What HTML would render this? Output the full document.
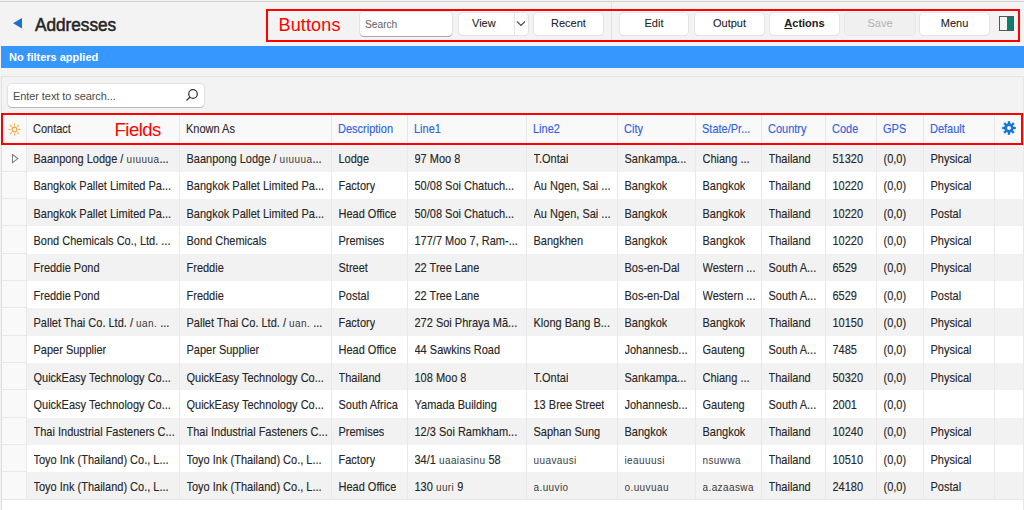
<!DOCTYPE html>
<html><head><meta charset="utf-8"><style>
*{box-sizing:border-box;margin:0;padding:0}
html,body{width:1024px;height:510px;overflow:hidden;background:#f3f3f3;font-family:"Liberation Sans",sans-serif;color:#333}
.a{position:absolute}
.btn{position:absolute;top:13px;height:22px;background:#fff;border-radius:4px;box-shadow:0 0 0 1px #e4e4e4, 0 1px 0 0 #d2d2d2;font-size:11px;color:#222;text-align:center;line-height:21px;-webkit-text-stroke:0.08px currentColor}
.cell{position:absolute;font-size:11px;white-space:nowrap;overflow:hidden;color:#262626;line-height:14px;transform:scaleY(1.08);-webkit-text-stroke:0.12px currentColor}
.vl{position:absolute;width:1px;background:#e8e8e8}
.hl{position:absolute;height:1px;background:#e8e8e8}
.th{font-size:10px;letter-spacing:0.4px;color:#3a3a3a;-webkit-text-stroke:0}
</style></head><body>

<div class="a" style="left:0;top:0;width:1024px;height:1px;background:#f2f2f2"></div>
<div class="a" style="left:0;top:1px;width:1024px;height:1px;background:#d2d2d2"></div>
<div class="a" style="left:0;top:2px;width:1024px;height:44px;background:#f3f3f3"></div>
<svg class="a" style="left:13px;top:18px" width="10" height="11"><polygon points="9,0 9,10.5 0,5.25" fill="#1e6fd2"/></svg>
<div class="a" style="left:34.5px;top:14px;font-size:18px;color:#262626;line-height:22px;transform:scaleX(0.955);transform-origin:0 0;-webkit-text-stroke:0.55px #262626">Addresses</div>
<div class="a" style="left:611px;top:2px;width:1px;height:38px;background:#e2e2e2"></div>
<div class="a" style="left:266px;top:9px;width:754px;height:33px;border:2px solid #f00"></div>
<div class="a" style="left:278.5px;top:14.8px;font-size:18px;color:#f00;line-height:20px;letter-spacing:0.15px">Buttons</div>
<div class="btn" style="left:360px;top:12px;width:92px;height:24px;text-align:left;padding-left:5px;color:#6a6a6a;font-size:10.2px;line-height:25px;box-shadow:0 1px 0 0 #a8a8a8, 0 0 0 1px #e4e4e4">Search</div>
<div class="btn" style="left:459px;width:69px;text-align:left;padding-left:13px">View</div>
<div class="a" style="left:514px;top:13px;width:1px;height:22px;background:#e6e6e6"></div>
<svg class="a" style="left:516px;top:20px" width="10" height="7"><polyline points="1,1.5 5,5.5 9,1.5" fill="none" stroke="#4a4a4a" stroke-width="1.1"/></svg>
<div class="btn" style="left:534px;width:69px">Recent</div>
<div class="btn" style="left:620px;width:68px">Edit</div>
<div class="btn" style="left:695px;width:69px">Output</div>
<div class="btn" style="left:770px;width:69px;font-weight:bold;color:#1f1f1f"><span style="text-decoration:underline">A</span>ctions</div>
<div class="btn" style="left:845px;width:70px;background:#f0f0f0;color:#b5b5b5;box-shadow:0 0 0 1px #e6e6e6">Save</div>
<div class="btn" style="left:920px;width:69px">Menu</div>
<div class="a" style="left:999px;top:16px;width:15px;height:15px;border:1px solid #555;background:linear-gradient(90deg,#f4f4f4 0,#f4f4f4 7px,#0e7e6c 7px)"></div>
<div class="a" style="left:1px;top:46px;width:1023px;height:22px;background:#3697fe;color:#fff;font-weight:bold;font-size:11px;line-height:22px;padding-left:8px">No filters applied</div>
<div class="a" style="left:1px;top:76px;width:1023px;height:434px;border-top:1px solid #e2e2e2;border-left:1px solid #e2e2e2;background:#f3f3f3"></div>
<div class="a" style="left:8px;top:84px;width:196px;height:23px;background:#fff;border-radius:4px;box-shadow:0 1px 0 #b8b8b8,0 0 0 1px #e2e2e2;font-size:11px;color:#4a4a4a;line-height:24px;letter-spacing:-0.08px;padding-left:5px">Enter text to search...</div>
<svg class="a" style="left:185px;top:88px" width="14" height="14"><circle cx="8" cy="6" r="4.3" fill="none" stroke="#333" stroke-width="1.2"/><line x1="4.9" y1="9.1" x2="1.5" y2="12.5" stroke="#333" stroke-width="1.3"/></svg>
<div class="a" style="left:2px;top:113px;width:1022px;height:397px;background:#fff"></div>
<div class="a" style="left:2px;top:113px;width:1021px;height:31px;background:#f9f9f9"></div>
<div class="a" style="left:27px;top:144.50px;width:996px;height:27.33px;background:#f2f2f2"></div>
<div class="a" style="left:27px;top:171.83px;width:996px;height:27.33px;background:#ffffff"></div>
<div class="a" style="left:27px;top:199.16px;width:996px;height:27.33px;background:#f2f2f2"></div>
<div class="a" style="left:27px;top:226.49px;width:996px;height:27.33px;background:#ffffff"></div>
<div class="a" style="left:27px;top:253.82px;width:996px;height:27.33px;background:#f2f2f2"></div>
<div class="a" style="left:27px;top:281.15px;width:996px;height:27.33px;background:#ffffff"></div>
<div class="a" style="left:27px;top:308.48px;width:996px;height:27.33px;background:#f2f2f2"></div>
<div class="a" style="left:27px;top:335.81px;width:996px;height:27.33px;background:#ffffff"></div>
<div class="a" style="left:27px;top:363.14px;width:996px;height:27.33px;background:#f2f2f2"></div>
<div class="a" style="left:27px;top:390.47px;width:996px;height:27.33px;background:#ffffff"></div>
<div class="a" style="left:27px;top:417.80px;width:996px;height:27.33px;background:#f2f2f2"></div>
<div class="a" style="left:27px;top:445.13px;width:996px;height:27.33px;background:#ffffff"></div>
<div class="a" style="left:27px;top:472.46px;width:996px;height:27.33px;background:#f2f2f2"></div>
<div class="a" style="left:2px;top:144px;width:24px;height:355.29px;background:#f9f9f9"></div>
<div class="hl" style="left:2px;top:170.83px;width:25px"></div>
<div class="hl" style="left:2px;top:198.16px;width:25px"></div>
<div class="hl" style="left:2px;top:225.49px;width:25px"></div>
<div class="hl" style="left:2px;top:252.82px;width:25px"></div>
<div class="hl" style="left:2px;top:280.15px;width:25px"></div>
<div class="hl" style="left:2px;top:307.48px;width:25px"></div>
<div class="hl" style="left:2px;top:334.81px;width:25px"></div>
<div class="hl" style="left:2px;top:362.14px;width:25px"></div>
<div class="hl" style="left:2px;top:389.47px;width:25px"></div>
<div class="hl" style="left:2px;top:416.80px;width:25px"></div>
<div class="hl" style="left:2px;top:444.13px;width:25px"></div>
<div class="hl" style="left:2px;top:471.46px;width:25px"></div>
<div class="hl" style="left:2px;top:498.79px;width:25px"></div>
<div class="hl" style="left:2px;top:498.79px;width:1021px"></div>
<div class="vl" style="left:26px;top:113px;height:386.79px"></div>
<div class="vl" style="left:179px;top:113px;height:386.79px"></div>
<div class="vl" style="left:331px;top:113px;height:386.79px"></div>
<div class="vl" style="left:407px;top:113px;height:386.79px"></div>
<div class="vl" style="left:526px;top:113px;height:386.79px"></div>
<div class="vl" style="left:617px;top:113px;height:386.79px"></div>
<div class="vl" style="left:695px;top:113px;height:386.79px"></div>
<div class="vl" style="left:761px;top:113px;height:386.79px"></div>
<div class="vl" style="left:825px;top:113px;height:386.79px"></div>
<div class="vl" style="left:876px;top:113px;height:386.79px"></div>
<div class="vl" style="left:923px;top:113px;height:386.79px"></div>
<div class="vl" style="left:994px;top:113px;height:386.79px"></div>
<div class="vl" style="left:1px;top:113px;height:397px;background:#dcdcdc"></div>
<div class="vl" style="left:1023px;top:76px;height:434px"></div>
<div class="cell" style="left:33px;top:121.8px;color:#2b2b2b">Contact</div>
<div class="cell" style="left:186px;top:121.8px;color:#2b2b2b">Known As</div>
<div class="cell" style="left:338px;top:121.8px;color:#2f61e0">Description</div>
<div class="cell" style="left:414px;top:121.8px;color:#2f61e0">Line1</div>
<div class="cell" style="left:533px;top:121.8px;color:#2f61e0">Line2</div>
<div class="cell" style="left:624px;top:121.8px;color:#2f61e0">City</div>
<div class="cell" style="left:702px;top:121.8px;color:#2f61e0">State/Pr...</div>
<div class="cell" style="left:768px;top:121.8px;color:#2f61e0">Country</div>
<div class="cell" style="left:832px;top:121.8px;color:#2f61e0">Code</div>
<div class="cell" style="left:883px;top:121.8px;color:#2f61e0">GPS</div>
<div class="cell" style="left:930px;top:121.8px;color:#2f61e0">Default</div>
<svg class="a" style="left:8px;top:123px" width="13" height="13" viewBox="0 0 13 13"><circle cx="6.5" cy="6.5" r="2.4" fill="none" stroke="#f7a035" stroke-width="1.1"/><line x1="10.50" y1="6.50" x2="12.50" y2="6.50" stroke="#f7a035" stroke-width="1.1"/><line x1="9.33" y1="9.33" x2="10.74" y2="10.74" stroke="#f7a035" stroke-width="1.1"/><line x1="6.50" y1="10.50" x2="6.50" y2="12.50" stroke="#f7a035" stroke-width="1.1"/><line x1="3.67" y1="9.33" x2="2.26" y2="10.74" stroke="#f7a035" stroke-width="1.1"/><line x1="2.50" y1="6.50" x2="0.50" y2="6.50" stroke="#f7a035" stroke-width="1.1"/><line x1="3.67" y1="3.67" x2="2.26" y2="2.26" stroke="#f7a035" stroke-width="1.1"/><line x1="6.50" y1="2.50" x2="6.50" y2="0.50" stroke="#f7a035" stroke-width="1.1"/><line x1="9.33" y1="3.67" x2="10.74" y2="2.26" stroke="#f7a035" stroke-width="1.1"/></svg>
<svg class="a" style="left:1002px;top:121px" width="14" height="14" viewBox="0 0 14 14"><g fill="#1a74d6"><rect x="5.8" y="0.2" width="2.4" height="4" transform="rotate(0 7 7)"/><rect x="5.8" y="0.2" width="2.4" height="4" transform="rotate(45 7 7)"/><rect x="5.8" y="0.2" width="2.4" height="4" transform="rotate(90 7 7)"/><rect x="5.8" y="0.2" width="2.4" height="4" transform="rotate(135 7 7)"/><rect x="5.8" y="0.2" width="2.4" height="4" transform="rotate(180 7 7)"/><rect x="5.8" y="0.2" width="2.4" height="4" transform="rotate(225 7 7)"/><rect x="5.8" y="0.2" width="2.4" height="4" transform="rotate(270 7 7)"/><rect x="5.8" y="0.2" width="2.4" height="4" transform="rotate(315 7 7)"/><circle cx="7" cy="7" r="4.7"/></g><circle cx="7" cy="7" r="2" fill="#f9f9f9"/></svg>
<svg class="a" style="left:12px;top:154px" width="7" height="10"><polygon points="0.5,0.5 5.8,4.6 0.5,8.7" fill="none" stroke="#808080" stroke-width="1.05"/></svg>
<div class="a" style="left:1px;top:113px;width:1022px;height:32px;border:2px solid #f00"></div>
<div class="a" style="left:114.5px;top:118.5px;font-size:18.5px;color:#f00;letter-spacing:-0.5px;line-height:22px">Fields</div>
<div class="cell" style="left:33.5px;top:152.00px;max-width:145px">Baanpong Lodge / <span class="th">uıuuua</span>...</div>
<div class="cell" style="left:186.5px;top:152.00px;max-width:144px">Baanpong Lodge / <span class="th">uıuuua</span>...</div>
<div class="cell" style="left:338.5px;top:152.00px;max-width:68px">Lodge</div>
<div class="cell" style="left:414.5px;top:152.00px;max-width:111px">97 Moo 8</div>
<div class="cell" style="left:533.5px;top:152.00px;max-width:83px">T.Ontai</div>
<div class="cell" style="left:624.5px;top:152.00px;max-width:70px">Sankampa...</div>
<div class="cell" style="left:702.5px;top:152.00px;max-width:58px">Chiang ...</div>
<div class="cell" style="left:768.5px;top:152.00px;max-width:56px">Thailand</div>
<div class="cell" style="left:832.5px;top:152.00px;max-width:43px">51320</div>
<div class="cell" style="left:883.5px;top:152.00px;max-width:39px">(0,0)</div>
<div class="cell" style="left:930.5px;top:152.00px;max-width:63px">Physical</div>
<div class="cell" style="left:33.5px;top:179.33px;max-width:145px">Bangkok Pallet Limited Pa...</div>
<div class="cell" style="left:186.5px;top:179.33px;max-width:144px">Bangkok Pallet Limited Pa...</div>
<div class="cell" style="left:338.5px;top:179.33px;max-width:68px">Factory</div>
<div class="cell" style="left:414.5px;top:179.33px;max-width:111px">50/08 Soi Chatuch...</div>
<div class="cell" style="left:533.5px;top:179.33px;max-width:83px">Au Ngen, Sai ...</div>
<div class="cell" style="left:624.5px;top:179.33px;max-width:70px">Bangkok</div>
<div class="cell" style="left:702.5px;top:179.33px;max-width:58px">Bangkok</div>
<div class="cell" style="left:768.5px;top:179.33px;max-width:56px">Thailand</div>
<div class="cell" style="left:832.5px;top:179.33px;max-width:43px">10220</div>
<div class="cell" style="left:883.5px;top:179.33px;max-width:39px">(0,0)</div>
<div class="cell" style="left:930.5px;top:179.33px;max-width:63px">Physical</div>
<div class="cell" style="left:33.5px;top:206.66px;max-width:145px">Bangkok Pallet Limited Pa...</div>
<div class="cell" style="left:186.5px;top:206.66px;max-width:144px">Bangkok Pallet Limited Pa...</div>
<div class="cell" style="left:338.5px;top:206.66px;max-width:68px">Head Office</div>
<div class="cell" style="left:414.5px;top:206.66px;max-width:111px">50/08 Soi Chatuch...</div>
<div class="cell" style="left:533.5px;top:206.66px;max-width:83px">Au Ngen, Sai ...</div>
<div class="cell" style="left:624.5px;top:206.66px;max-width:70px">Bangkok</div>
<div class="cell" style="left:702.5px;top:206.66px;max-width:58px">Bangkok</div>
<div class="cell" style="left:768.5px;top:206.66px;max-width:56px">Thailand</div>
<div class="cell" style="left:832.5px;top:206.66px;max-width:43px">10220</div>
<div class="cell" style="left:883.5px;top:206.66px;max-width:39px">(0,0)</div>
<div class="cell" style="left:930.5px;top:206.66px;max-width:63px">Postal</div>
<div class="cell" style="left:33.5px;top:233.99px;max-width:145px">Bond Chemicals Co., Ltd. ...</div>
<div class="cell" style="left:186.5px;top:233.99px;max-width:144px">Bond Chemicals</div>
<div class="cell" style="left:338.5px;top:233.99px;max-width:68px">Premises</div>
<div class="cell" style="left:414.5px;top:233.99px;max-width:111px">177/7 Moo 7, Ram-...</div>
<div class="cell" style="left:533.5px;top:233.99px;max-width:83px">Bangkhen</div>
<div class="cell" style="left:624.5px;top:233.99px;max-width:70px">Bangkok</div>
<div class="cell" style="left:702.5px;top:233.99px;max-width:58px">Bangkok</div>
<div class="cell" style="left:768.5px;top:233.99px;max-width:56px">Thailand</div>
<div class="cell" style="left:832.5px;top:233.99px;max-width:43px">10220</div>
<div class="cell" style="left:883.5px;top:233.99px;max-width:39px">(0,0)</div>
<div class="cell" style="left:930.5px;top:233.99px;max-width:63px">Physical</div>
<div class="cell" style="left:33.5px;top:261.32px;max-width:145px">Freddie Pond</div>
<div class="cell" style="left:186.5px;top:261.32px;max-width:144px">Freddie</div>
<div class="cell" style="left:338.5px;top:261.32px;max-width:68px">Street</div>
<div class="cell" style="left:414.5px;top:261.32px;max-width:111px">22 Tree Lane</div>
<div class="cell" style="left:624.5px;top:261.32px;max-width:70px">Bos-en-Dal</div>
<div class="cell" style="left:702.5px;top:261.32px;max-width:58px">Western ...</div>
<div class="cell" style="left:768.5px;top:261.32px;max-width:56px">South A...</div>
<div class="cell" style="left:832.5px;top:261.32px;max-width:43px">6529</div>
<div class="cell" style="left:883.5px;top:261.32px;max-width:39px">(0,0)</div>
<div class="cell" style="left:930.5px;top:261.32px;max-width:63px">Physical</div>
<div class="cell" style="left:33.5px;top:288.65px;max-width:145px">Freddie Pond</div>
<div class="cell" style="left:186.5px;top:288.65px;max-width:144px">Freddie</div>
<div class="cell" style="left:338.5px;top:288.65px;max-width:68px">Postal</div>
<div class="cell" style="left:414.5px;top:288.65px;max-width:111px">22 Tree Lane</div>
<div class="cell" style="left:624.5px;top:288.65px;max-width:70px">Bos-en-Dal</div>
<div class="cell" style="left:702.5px;top:288.65px;max-width:58px">Western ...</div>
<div class="cell" style="left:768.5px;top:288.65px;max-width:56px">South A...</div>
<div class="cell" style="left:832.5px;top:288.65px;max-width:43px">6529</div>
<div class="cell" style="left:883.5px;top:288.65px;max-width:39px">(0,0)</div>
<div class="cell" style="left:930.5px;top:288.65px;max-width:63px">Postal</div>
<div class="cell" style="left:33.5px;top:315.98px;max-width:145px">Pallet Thai Co. Ltd. / <span class="th">uan.</span> ...</div>
<div class="cell" style="left:186.5px;top:315.98px;max-width:144px">Pallet Thai Co. Ltd. / <span class="th">uan.</span> ...</div>
<div class="cell" style="left:338.5px;top:315.98px;max-width:68px">Factory</div>
<div class="cell" style="left:414.5px;top:315.98px;max-width:111px">272 Soi Phraya Mã...</div>
<div class="cell" style="left:533.5px;top:315.98px;max-width:83px">Klong Bang B...</div>
<div class="cell" style="left:624.5px;top:315.98px;max-width:70px">Bangkok</div>
<div class="cell" style="left:702.5px;top:315.98px;max-width:58px">Bangkok</div>
<div class="cell" style="left:768.5px;top:315.98px;max-width:56px">Thailand</div>
<div class="cell" style="left:832.5px;top:315.98px;max-width:43px">10150</div>
<div class="cell" style="left:883.5px;top:315.98px;max-width:39px">(0,0)</div>
<div class="cell" style="left:930.5px;top:315.98px;max-width:63px">Physical</div>
<div class="cell" style="left:33.5px;top:343.31px;max-width:145px">Paper Supplier</div>
<div class="cell" style="left:186.5px;top:343.31px;max-width:144px">Paper Supplier</div>
<div class="cell" style="left:338.5px;top:343.31px;max-width:68px">Head Office</div>
<div class="cell" style="left:414.5px;top:343.31px;max-width:111px">44 Sawkins Road</div>
<div class="cell" style="left:624.5px;top:343.31px;max-width:70px">Johannesb...</div>
<div class="cell" style="left:702.5px;top:343.31px;max-width:58px">Gauteng</div>
<div class="cell" style="left:768.5px;top:343.31px;max-width:56px">South A...</div>
<div class="cell" style="left:832.5px;top:343.31px;max-width:43px">7485</div>
<div class="cell" style="left:883.5px;top:343.31px;max-width:39px">(0,0)</div>
<div class="cell" style="left:930.5px;top:343.31px;max-width:63px">Physical</div>
<div class="cell" style="left:33.5px;top:370.64px;max-width:145px">QuickEasy Technology Co...</div>
<div class="cell" style="left:186.5px;top:370.64px;max-width:144px">QuickEasy Technology Co...</div>
<div class="cell" style="left:338.5px;top:370.64px;max-width:68px">Thailand</div>
<div class="cell" style="left:414.5px;top:370.64px;max-width:111px">108 Moo 8</div>
<div class="cell" style="left:533.5px;top:370.64px;max-width:83px">T.Ontai</div>
<div class="cell" style="left:624.5px;top:370.64px;max-width:70px">Sankampa...</div>
<div class="cell" style="left:702.5px;top:370.64px;max-width:58px">Chiang ...</div>
<div class="cell" style="left:768.5px;top:370.64px;max-width:56px">Thailand</div>
<div class="cell" style="left:832.5px;top:370.64px;max-width:43px">50320</div>
<div class="cell" style="left:883.5px;top:370.64px;max-width:39px">(0,0)</div>
<div class="cell" style="left:930.5px;top:370.64px;max-width:63px">Physical</div>
<div class="cell" style="left:33.5px;top:397.97px;max-width:145px">QuickEasy Technology Co...</div>
<div class="cell" style="left:186.5px;top:397.97px;max-width:144px">QuickEasy Technology Co...</div>
<div class="cell" style="left:338.5px;top:397.97px;max-width:68px">South Africa</div>
<div class="cell" style="left:414.5px;top:397.97px;max-width:111px">Yamada Building</div>
<div class="cell" style="left:533.5px;top:397.97px;max-width:83px">13 Bree Street</div>
<div class="cell" style="left:624.5px;top:397.97px;max-width:70px">Johannesb...</div>
<div class="cell" style="left:702.5px;top:397.97px;max-width:58px">Gauteng</div>
<div class="cell" style="left:768.5px;top:397.97px;max-width:56px">South A...</div>
<div class="cell" style="left:832.5px;top:397.97px;max-width:43px">2001</div>
<div class="cell" style="left:883.5px;top:397.97px;max-width:39px">(0,0)</div>
<div class="cell" style="left:33.5px;top:425.30px;max-width:145px">Thai Industrial Fasteners C...</div>
<div class="cell" style="left:186.5px;top:425.30px;max-width:144px">Thai Industrial Fasteners C...</div>
<div class="cell" style="left:338.5px;top:425.30px;max-width:68px">Premises</div>
<div class="cell" style="left:414.5px;top:425.30px;max-width:111px">12/3 Soi Ramkham...</div>
<div class="cell" style="left:533.5px;top:425.30px;max-width:83px">Saphan Sung</div>
<div class="cell" style="left:624.5px;top:425.30px;max-width:70px">Bangkok</div>
<div class="cell" style="left:702.5px;top:425.30px;max-width:58px">Bangkok</div>
<div class="cell" style="left:768.5px;top:425.30px;max-width:56px">Thailand</div>
<div class="cell" style="left:832.5px;top:425.30px;max-width:43px">10240</div>
<div class="cell" style="left:883.5px;top:425.30px;max-width:39px">(0,0)</div>
<div class="cell" style="left:930.5px;top:425.30px;max-width:63px">Physical</div>
<div class="cell" style="left:33.5px;top:452.63px;max-width:145px">Toyo Ink (Thailand) Co., L...</div>
<div class="cell" style="left:186.5px;top:452.63px;max-width:144px">Toyo Ink (Thailand) Co., L...</div>
<div class="cell" style="left:338.5px;top:452.63px;max-width:68px">Factory</div>
<div class="cell" style="left:414.5px;top:452.63px;max-width:111px">34/1 <span class="th">uaaiasinu</span> 58</div>
<div class="cell" style="left:533.5px;top:452.63px;max-width:83px"><span class="th">uuavausi</span></div>
<div class="cell" style="left:624.5px;top:452.63px;max-width:70px"><span class="th">ieauuusi</span></div>
<div class="cell" style="left:702.5px;top:452.63px;max-width:58px"><span class="th">nsuwwa</span></div>
<div class="cell" style="left:768.5px;top:452.63px;max-width:56px">Thailand</div>
<div class="cell" style="left:832.5px;top:452.63px;max-width:43px">10510</div>
<div class="cell" style="left:883.5px;top:452.63px;max-width:39px">(0,0)</div>
<div class="cell" style="left:930.5px;top:452.63px;max-width:63px">Physical</div>
<div class="cell" style="left:33.5px;top:479.96px;max-width:145px">Toyo Ink (Thailand) Co., L...</div>
<div class="cell" style="left:186.5px;top:479.96px;max-width:144px">Toyo Ink (Thailand) Co., L...</div>
<div class="cell" style="left:338.5px;top:479.96px;max-width:68px">Head Office</div>
<div class="cell" style="left:414.5px;top:479.96px;max-width:111px">130 <span class="th">uuri</span> 9</div>
<div class="cell" style="left:533.5px;top:479.96px;max-width:83px"><span class="th">a.uuvio</span></div>
<div class="cell" style="left:624.5px;top:479.96px;max-width:70px"><span class="th">o.uuvuau</span></div>
<div class="cell" style="left:702.5px;top:479.96px;max-width:58px"><span class="th">a.azaaswa</span></div>
<div class="cell" style="left:768.5px;top:479.96px;max-width:56px">Thailand</div>
<div class="cell" style="left:832.5px;top:479.96px;max-width:43px">24180</div>
<div class="cell" style="left:883.5px;top:479.96px;max-width:39px">(0,0)</div>
<div class="cell" style="left:930.5px;top:479.96px;max-width:63px">Postal</div>
</body></html>
